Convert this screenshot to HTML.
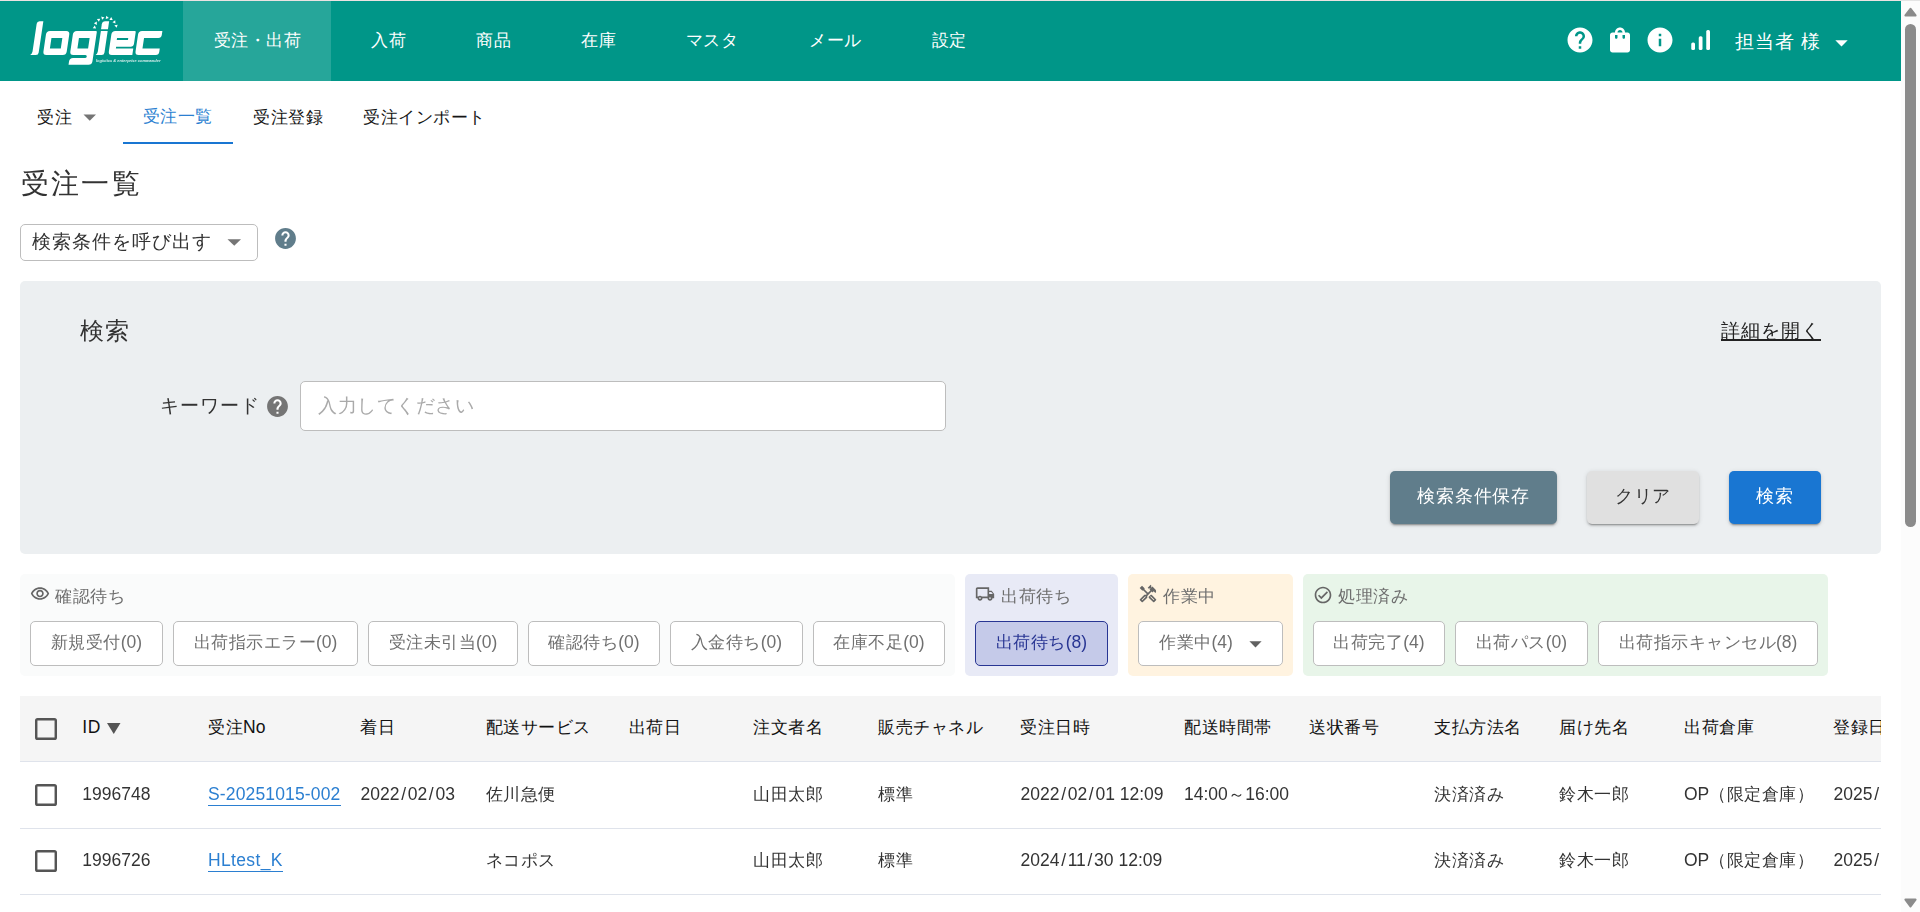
<!DOCTYPE html>
<html lang="ja">
<head>
<meta charset="utf-8">
<title>受注一覧</title>
<style>
html,body{margin:0;padding:0;}
body{width:1920px;height:912px;overflow:hidden;background:#fff;position:relative;font-family:"Liberation Sans",sans-serif;color:#333;}
.a{position:absolute;}
.t{position:absolute;white-space:nowrap;line-height:24px;height:24px;font-size:17.5px;}
.c{text-align:center;}
.j{font-size:16.5px;letter-spacing:0.5px;font-style:normal;font-weight:normal;}
.j19{font-size:17.75px;letter-spacing:0.75px;}
.j20{font-size:19px !important;letter-spacing:1px;}
.j25{font-size:23.5px !important;letter-spacing:1px;}
.j30{font-size:28.25px !important;letter-spacing:2.2px;}
i.s{font-style:normal;margin:0 1.7px;}
.w{color:#fff;}
.nav{top:27.5px;width:140px;margin-left:-70px;}
.g{color:#6e6e6e;}
.grp{position:absolute;top:574px;height:102px;border-radius:5px;}
.sb{position:absolute;top:621px;height:43px;border:1px solid #bdbdbd;border-radius:5px;background:#fff;box-sizing:content-box;}
.sb span{position:absolute;left:0;right:0;top:8px;line-height:24px;font-size:17.5px;text-align:center;color:#707070;white-space:nowrap;}
.btn{position:absolute;top:471px;height:52.5px;border-radius:5px;box-shadow:0 3px 1px -2px rgba(0,0,0,.2),0 2px 2px 0 rgba(0,0,0,.14),0 1px 5px 0 rgba(0,0,0,.12);}
.btn span{position:absolute;left:0;right:0;top:12.75px;line-height:24px;font-size:17.75px;letter-spacing:0.75px;text-align:center;white-space:nowrap;}
.cb{position:absolute;left:35px;width:17px;height:17px;border:2.5px solid #555;border-radius:3px;}
.ln{position:absolute;left:20px;width:1861px;height:1px;background:#dfe3eb;}
.th{color:#111;top:715px;}
.r1{top:781.5px;}
.r2{top:848px;}
a.lk{color:#2b7fd1;text-decoration:none;border-bottom:1.5px solid #2b7fd1;padding-bottom:0;line-height:21px;display:inline-block;}
</style>
</head>
<body>
<!-- root layer (LCD text) -->
<div class="a" style="left:0;top:0;width:1901px;height:81px;background:#009688;"></div>
<div class="a" style="left:183px;top:0;width:148px;height:81px;background:#26a69a;"></div>
<div class="a" style="left:0;top:0;width:1901px;height:1px;background:#ebe2e2;"></div>
<div class="t c w nav j" style="left:257.5px;">受注・出荷</div>
<div class="t c w nav j" style="left:388.6px;">入荷</div>
<div class="t c w nav j" style="left:493.5px;">商品</div>
<div class="t c w nav j" style="left:598.5px;">在庫</div>
<div class="t c w nav j" style="left:712px;">マスタ</div>
<div class="t c w nav j" style="left:835.5px;">メール</div>
<div class="t c w nav j" style="left:949px;">設定</div>
<div class="t w j20" style="left:1735px;top:30px;">担当者 様</div>
<div class="t j" style="left:37px;top:104.5px;color:#151515;">受注</div>
<div class="t j" style="left:142.5px;top:104px;color:#2b7fd1;">受注一覧</div>
<div class="t j" style="left:253px;top:104.5px;color:#151515;">受注登録</div>
<div class="t j" style="left:363px;top:104.5px;color:#151515;">受注インポート</div>
<div class="a" style="left:20px;top:696px;width:1861px;height:65px;background:#f5f5f5;"></div>
<div class="a" style="left:0;top:690px;width:1881px;height:80px;overflow:hidden;">
<div class="a" style="left:0;top:-690px;width:1920px;height:912px;">
<div class="t th" style="left:82.25px;letter-spacing:0.7px;">ID</div>
<div class="t th" style="left:208px;"><i class="j">受注</i>No</div>
<div class="t th j" style="left:360px;">着日</div>
<div class="t th j" style="left:485.5px;">配送サービス</div>
<div class="t th j" style="left:628.5px;">出荷日</div>
<div class="t th j" style="left:753px;">注文者名</div>
<div class="t th j" style="left:878px;">販売チャネル</div>
<div class="t th j" style="left:1020px;">受注日時</div>
<div class="t th j" style="left:1184px;">配送時間帯</div>
<div class="t th j" style="left:1309px;">送状番号</div>
<div class="t th j" style="left:1434px;">支払方法名</div>
<div class="t th j" style="left:1559px;">届け先名</div>
<div class="t th j" style="left:1684px;">出荷倉庫</div>
<div class="t th j" style="left:1833px;">登録日時</div>
</div>
</div>
<!-- composited layer (grayscale text) -->
<div id="wrap" style="position:absolute;left:0;top:0;width:1920px;height:912px;overflow:hidden;will-change:transform;">
<!-- header -->

<!-- logo -->
<svg class="a" style="left:20px;top:10px;" width="160" height="64" viewBox="20 10 160 64">
 <g fill="#fff" fill-rule="evenodd" transform="translate(8.223 0) skewX(-8.5)">
  <path d="M34.5,21.2H38.3V52.4a2.5,2.5 0 0 1 -2.5,2.5H30.2Q32,53.8 32,51.5V23.7a2.5,2.5 0 0 1 2.5,-2.5z"/>
  <path d="M46.4,31.1H62.7a3.5,3.5 0 0 1 3.5,3.5V51.4a3.5,3.5 0 0 1 -3.5,3.5H46.4a3.5,3.5 0 0 1 -3.5,-3.5V34.6a3.500,3.500 0 0 1 3.500,-3.500zM48.9,37.950V48.4H59.8V37.950z"/>
  <path d="M73.3,31.1H92.4Q93.4,31.1 93.4,32.1V61.3Q93.4,64.8 89.9,64.8H70V61.6Q70,58.1 73.5,58.1H85.4Q87,58.1 87,56.5Q87,54.9 85.4,54.9H73.3Q69.8,54.9 69.8,51.4V34.6Q69.8,31.1 73.3,31.1zM76.4,37.950V48.4H87.1V37.950z"/>
  <path d="M100.2,21.2H104.1V29.2H97.2V24.2a3,3 0 0 1 3,-3z"/>
  <path d="M97.3,31.1H104.1V52.4a2.5,2.5 0 0 1 -2.5,2.5H95.600Q97.3,53.8 97.3,51.5z"/>
  <path d="M111.8,31.1H131.3Q132.3,31.1 132.3,32.1V43.7a3,3 0 0 1 -3,3H114.9V48.6H132.3V54.9H111.8a3.500,3.500 0 0 1 -3.500,-3.500V34.6a3.500,3.500 0 0 1 3.500,-3.500zM114.5,37.950V40H125.7V37.950z"/>
  <path d="M138.5,31.1H158.8V35a3,3 0 0 1 -3,2.950H141.5V48.6H158.8V51.9a3,3 0 0 1 -3,3H138.5a3.500,3.500 0 0 1 -3.500,-3.500V34.6a3.500,3.500 0 0 1 3.500,-3.500z"/>
 </g>
 <path fill="#fff" d="M94.80,25.50L92.74,28.15L96.11,28.59z M96.82,21.55L93.89,23.19L96.82,24.92z M100.23,18.72L96.88,19.08L98.91,21.81z M104.47,17.43L101.25,16.46L102.05,19.77z M108.88,17.91L106.29,15.76L105.74,19.11z M112.75,20.07L111.21,17.08L109.39,19.95z M115.46,23.57L115.22,20.22L112.42,22.15z M116.60,27.86L117.68,24.67L114.35,25.36z"/>
 <text x="96" y="61.8" fill="#fff" fill-opacity="0.85" font-family="Liberation Sans, sans-serif" font-size="3.600" font-weight="bold" font-style="italic" textLength="64.5" lengthAdjust="spacingAndGlyphs">logistics &amp; enterprise commander</text>
</svg>

<!-- nav -->

<!-- header icons -->
<svg class="a" style="left:1565px;top:25px;" width="30" height="30" viewBox="0 0 24 24"><path fill="#fff" d="M12 2C6.48 2 2 6.48 2 12s4.48 10 10 10 10-4.48 10-10S17.52 2 12 2zm1 17h-2v-2h2v2zm2.07-7.75l-.9.92C13.45 12.9 13 13.5 13 15h-2v-.5c0-1.1.45-2.1 1.17-2.83l1.24-1.26c.37-.36.59-.86.59-1.41 0-1.1-.9-2-2-2s-2 .9-2 2H8c0-2.21 1.79-4 4-4s4 1.79 4 4c0 .88-.36 1.68-.93 2.25z"/></svg>
<svg class="a" style="left:1605px;top:25px;" width="30" height="30" viewBox="0 0 24 24"><path fill="#fff" d="M18 6h-2c0-2.21-1.79-4-4-4S8 3.790 8 6H6c-1.100 0-2 .9-2 2v12c0 1.100.9 2 2 2h12c1.100 0 2-.9 2-2V8c0-1.100-.9-2-2-2zm-8 4c0 .55-.45 1-1 1s-1-.45-1-1V8h2v2zm2-6c1.100 0 2 .9 2 2h-4c0-1.100.9-2 2-2zm4 6c0 .55-.45 1-1 1s-1-.45-1-1V8h2v2z"/></svg>
<svg class="a" style="left:1645px;top:25px;" width="30" height="30" viewBox="0 0 24 24"><path fill="#fff" d="M12 2C6.48 2 2 6.48 2 12s4.48 10 10 10 10-4.48 10-10S17.52 2 12 2zm1 15h-2v-6h2v6zm0-8h-2V7h2v2z"/></svg>
<svg class="a" style="left:1685px;top:25px;" width="30" height="30" viewBox="0 0 24 24"><g fill="#fff"><rect x="5" y="14" width="3" height="6" rx="1.2"/><rect x="11" y="9" width="3" height="11" rx="1.2"/><rect x="17" y="4" width="3" height="16" rx="1.2"/></g></svg>
<svg class="a" style="left:1835px;top:40px;" width="13" height="7" viewBox="0 0 13 7"><path fill="#fff" d="M0.3 0.3h12.4L6.5 6.5z"/></svg>

<!-- scrollbar -->
<div class="a" style="left:1901px;top:0;width:19px;height:912px;background:#fcfcfc;"></div>
<div class="a" style="left:1901px;top:0;width:19px;height:1px;background:#e4e4e4;"></div>
<svg class="a" style="left:1901px;top:0;" width="19" height="912" viewBox="0 0 19 912">
 <path fill="#8b8b8b" stroke="#8b8b8b" stroke-width="2.2" stroke-linejoin="round" d="M9.5 8.9L14.500 15.5H4.500z"/>
 <rect x="4" y="24" width="11" height="503" rx="5.5" fill="#8b8b8b"/>
 <path fill="#8b8b8b" stroke="#8b8b8b" stroke-width="2.2" stroke-linejoin="round" d="M9.5 906.3L14.500 899.6H4.500z"/>
</svg>

<!-- sub nav -->
<svg class="a" style="left:82.5px;top:114px;" width="14" height="8" viewBox="0 0 14 8"><path fill="#757575" d="M0.5 0.5h12.5L6.75 6.75z"/></svg>
<div class="a" style="left:123px;top:142px;width:110px;height:2px;background:#1976d2;"></div>

<!-- title -->
<div class="t j30" style="left:21px;top:164.5px;line-height:36px;height:36px;">受注一覧</div>

<!-- select -->
<div class="a" style="left:20px;top:224px;width:236px;height:35px;border:1px solid #bdbdbd;border-radius:5px;background:#fff;"></div>
<div class="t j20" style="left:32px;top:229.5px;">検索条件を呼び出す</div>
<svg class="a" style="left:226.5px;top:238.5px;" width="15" height="8" viewBox="0 0 15 8"><path fill="#757575" d="M0.5 0.3h13.5L7.25 6.800z"/></svg>
<svg class="a" style="left:272.75px;top:225.75px;" width="25" height="25" viewBox="0 0 24 24"><circle cx="12" cy="12" r="8" fill="#fff"/><path fill="#607d8b" d="M12 2C6.48 2 2 6.48 2 12s4.48 10 10 10 10-4.48 10-10S17.520 2 12 2zm1 17h-2v-2h2v2zm2.070-7.750l-.9.920C13.450 12.900 13 13.500 13 15h-2v-.5c0-1.100.450-2.100 1.170-2.830l1.240-1.260c.370-.36.590-.86.590-1.410 0-1.100-.9-2-2-2s-2 .9-2 2H8c0-2.210 1.790-4 4-4s4 1.790 4 4c0 .88-.36 1.680-.930 2.250z"/></svg>

<!-- search panel -->
<div class="a" style="left:20px;top:281px;width:1861px;height:273px;background:#eceff1;border-radius:5px;"></div>
<div class="t j25" style="left:80px;top:315.5px;line-height:30px;height:30px;">検索</div>
<div class="t" style="left:1721px;top:318.5px;font-size:19px;letter-spacing:1px;color:#222;text-decoration:underline;text-underline-offset:2px;text-decoration-thickness:1.5px;">詳細を開く</div>
<div class="t j20" style="left:160px;top:393.5px;">キーワード</div>
<svg class="a" style="left:265px;top:393.750px;" width="25" height="25" viewBox="0 0 24 24"><circle cx="12" cy="12" r="8" fill="#fff"/><path fill="#757575" d="M12 2C6.48 2 2 6.48 2 12s4.48 10 10 10 10-4.48 10-10S17.520 2 12 2zm1 17h-2v-2h2v2zm2.070-7.750l-.9.920C13.450 12.900 13 13.500 13 15h-2v-.5c0-1.100.450-2.100 1.170-2.830l1.240-1.260c.370-.36.590-.86.590-1.410 0-1.100-.9-2-2-2s-2 .9-2 2H8c0-2.210 1.790-4 4-4s4 1.790 4 4c0 .88-.36 1.680-.930 2.250z"/></svg>
<div class="a" style="left:300px;top:381px;width:644px;height:48px;border:1px solid #bdbdbd;border-radius:5px;background:#fff;"></div>
<div class="t" style="left:318px;top:393.5px;font-size:19px;letter-spacing:0.5px;color:#aaa;">入力してください</div>

<div class="btn" style="left:1390px;width:167px;background:#607d8b;"><span class="w">検索条件保存</span></div>
<div class="btn" style="left:1587px;width:112px;background:#e0e0e0;"><span style="color:#333;">クリア</span></div>
<div class="btn" style="left:1729px;width:92px;background:#1976d2;"><span class="w">検索</span></div>

<!-- status groups -->
<div class="grp" style="left:20px;width:935px;background:#fafbfb;"></div>
<div class="grp" style="left:965px;width:153px;background:#e8eaf6;"></div>
<div class="grp" style="left:1128px;width:165px;background:#fff3e0;"></div>
<div class="grp" style="left:1303px;width:525px;background:#e8f5e9;"></div>


<svg class="a" style="left:30px;top:583.75px;" width="20" height="20" viewBox="0 0 24 24"><path fill="#666" d="M12 6c3.790 0 7.170 2.130 8.820 5.500C19.170 14.870 15.790 17 12 17s-7.170-2.130-8.820-5.500C4.830 8.130 8.210 6 12 6m0-2C7 4 2.730 7.110 1 11.500 2.730 15.890 7 19 12 19s9.270-3.110 11-7.500C21.270 7.110 17 4 12 4zm0 5c1.380 0 2.500 1.120 2.500 2.500S13.380 14 12 14s-2.500-1.120-2.500-2.500S10.620 9 12 9m0-2c-2.480 0-4.500 2.020-4.500 4.500s2.020 4.500 4.500 4.500 4.500-2.020 4.500-4.500-2.020-4.500-4.500-4.500z"/></svg>
<svg class="a" style="left:975px;top:583.75px;" width="20" height="20" viewBox="0 0 24 24"><path fill="#666" d="M20 8h-3V4H3c-1.100 0-2 .9-2 2v11h2c0 1.660 1.340 3 3 3s3-1.340 3-3h6c0 1.660 1.340 3 3 3s3-1.340 3-3h2v-5l-3-4zm-.5 1.500l1.960 2.500H17V9.500h2.500zM6 18c-.55 0-1-.45-1-1s.45-1 1-1 1 .45 1 1-.45 1-1 1zm2.220-3c-.55-.61-1.330-1-2.220-1s-1.670.39-2.220 1H3V6h12v9H8.220zM18 18c-.55 0-1-.45-1-1s.45-1 1-1 1 .45 1 1-.45 1-1 1z"/></svg>
<svg class="a" style="left:1138px;top:584px;" width="20" height="20" viewBox="0 0 24 24"><g fill="#666"><path d="M21.670,18.170l-5.300-5.300h-0.990l-2.540,2.540v0.990l5.300,5.300c0.390,0.390,1.020,0.390,1.410,0l2.120-2.120 C22.060,19.200,22.060,18.560,21.670,18.170z M18.840,19.590l-4.240-4.240l0.710-0.710l4.240,4.240L18.840,19.590z"/><path d="M17.340,10.190l1.410-1.410l2.120,2.120c1.170-1.170,1.170-3.070,0-4.240l-3.540-3.540l-1.410,1.410V1.710L15.220,1l-3.540,3.540l0.710,0.710 h2.830l-1.410,1.410l1.060,1.060l-2.890,2.890L7.850,6.480V5.060L4.830,2.040L2,4.870l3.030,3.030h1.410l4.130,4.130l-0.850,0.850H7.600l-5.300,5.300 c-0.390,0.390-0.390,1.020,0,1.410l2.120,2.120c0.390,0.390,1.020,0.390,1.410,0l5.300-5.300v-2.120l5.150-5.150L17.340,10.190z M9.360,15.340 l-4.240,4.240l-0.710-0.710l4.240-4.240l0,0L9.360,15.340L9.360,15.340z"/></g></svg>
<svg class="a" style="left:1313px;top:584.5px;" width="20" height="20" viewBox="0 0 24 24"><path fill="#666" d="M12 2C6.480 2 2 6.480 2 12s4.480 10 10 10 10-4.480 10-10S17.520 2 12 2zm0 18c-4.410 0-8-3.590-8-8s3.590-8 8-8 8 3.590 8 8-3.590 8-8 8zm4.590-12.420L10 14.170l-2.590-2.580L6 13l4 4 8-8z"/></svg>
<div class="t g j" style="left:55px;top:584px;">確認待ち</div>
<div class="t g j" style="left:1001px;top:584px;">出荷待ち</div>
<div class="t g j" style="left:1163px;top:584px;">作業中</div>
<div class="t g j" style="left:1338px;top:584px;">処理済み</div>

<div class="sb" style="left:30px;width:131px;"><span><i class="j">新規受付</i>(0)</span></div>
<div class="sb" style="left:173px;width:183px;"><span><i class="j">出荷指示エラー</i>(0)</span></div>
<div class="sb" style="left:368px;width:148px;"><span><i class="j">受注未引当</i>(0)</span></div>
<div class="sb" style="left:528px;width:130px;"><span><i class="j">確認待ち</i>(0)</span></div>
<div class="sb" style="left:670px;width:131px;"><span><i class="j">入金待ち</i>(0)</span></div>
<div class="sb" style="left:813px;width:130px;"><span><i class="j">在庫不足</i>(0)</span></div>
<div class="sb" style="left:975px;width:131px;background:#c5cae9;border-color:#283593;"><span style="color:#283593;"><i class="j">出荷待ち</i>(8)</span></div>
<div class="sb" style="left:1138px;width:143px;"><span style="text-align:left;left:20px;"><i class="j">作業中</i>(4)</span></div>
<svg class="a" style="left:1249px;top:640.5px;" width="13" height="7" viewBox="0 0 13 7"><path fill="#616161" d="M0.4 0.3h12.2L6.5 6.6z"/></svg>
<div class="sb" style="left:1313px;width:130px;"><span><i class="j">出荷完了</i>(4)</span></div>
<div class="sb" style="left:1455px;width:131px;"><span><i class="j">出荷パス</i>(0)</span></div>
<div class="sb" style="left:1598px;width:218px;"><span><i class="j">出荷指示キャンセル</i>(8)</span></div>

<!-- table -->
<div class="ln" style="top:761px;"></div>
<div class="ln" style="top:828px;"></div>
<div class="ln" style="top:894px;"></div>
<svg class="a" style="left:35px;top:717.75px;" width="22" height="22" viewBox="0 0 22 22"><rect x="1.22" y="1.22" width="19.56" height="19.56" rx="1.4" fill="none" stroke="#555" stroke-width="2.44"/></svg>
<svg class="a" style="left:35px;top:784px;" width="22" height="22" viewBox="0 0 22 22"><rect x="1.22" y="1.22" width="19.56" height="19.56" rx="1.4" fill="none" stroke="#555" stroke-width="2.44"/></svg>
<svg class="a" style="left:35px;top:850px;" width="22" height="22" viewBox="0 0 22 22"><rect x="1.22" y="1.22" width="19.56" height="19.56" rx="1.4" fill="none" stroke="#555" stroke-width="2.44"/></svg>

<div class="a" style="left:0;top:690px;width:1881px;height:222px;overflow:hidden;">
<div class="a" style="left:0;top:-690px;width:1920px;height:912px;">
<svg class="a" style="left:107px;top:723px;" width="14" height="12" viewBox="0 0 14 12"><path fill="#555" d="M0 0h13.5L6.75 11z"/></svg>

<div class="t r1" style="left:82.25px;">1996748</div>
<div class="t r1" style="left:208px;"><a class="lk" style="letter-spacing:0.15px;">S-20251015-002</a></div>
<div class="t r1" style="left:360.5px;">2022<i class="s">/</i>02<i class="s">/</i>03</div>
<div class="t r1" style="left:485.5px;"><span class="j">佐川急便</span></div>
<div class="t r1" style="left:753px;"><span class="j">山田太郎</span></div>
<div class="t r1" style="left:878px;"><span class="j">標準</span></div>
<div class="t r1" style="left:1020.5px;">2022<i class="s">/</i>02<i class="s">/</i>01 12:09</div>
<div class="t r1" style="left:1184px;">14:00<span class="j">～</span>16:00</div>
<div class="t r1" style="left:1434px;"><span class="j">決済済み</span></div>
<div class="t r1" style="left:1559px;"><span class="j">鈴木一郎</span></div>
<div class="t r1" style="left:1684px;">OP<span class="j">（限定倉庫）</span></div>
<div class="t r1" style="left:1833.5px;">2025<i class="s">/</i>10<i class="s">/</i>15</div>

<div class="t r2" style="left:82.25px;">1996726</div>
<div class="t r2" style="left:208px;"><a class="lk" style="letter-spacing:0.35px;">HLtest_K</a></div>
<div class="t r2" style="left:485.5px;"><span class="j">ネコポス</span></div>
<div class="t r2" style="left:753px;"><span class="j">山田太郎</span></div>
<div class="t r2" style="left:878px;"><span class="j">標準</span></div>
<div class="t r2" style="left:1020.5px;">2024<i class="s">/</i>11<i class="s">/</i>30 12:09</div>
<div class="t r2" style="left:1434px;"><span class="j">決済済み</span></div>
<div class="t r2" style="left:1559px;"><span class="j">鈴木一郎</span></div>
<div class="t r2" style="left:1684px;">OP<span class="j">（限定倉庫）</span></div>
<div class="t r2" style="left:1833.5px;">2025<i class="s">/</i>10<i class="s">/</i>15</div>
</div>
</div>

</div>
</body>
</html>
